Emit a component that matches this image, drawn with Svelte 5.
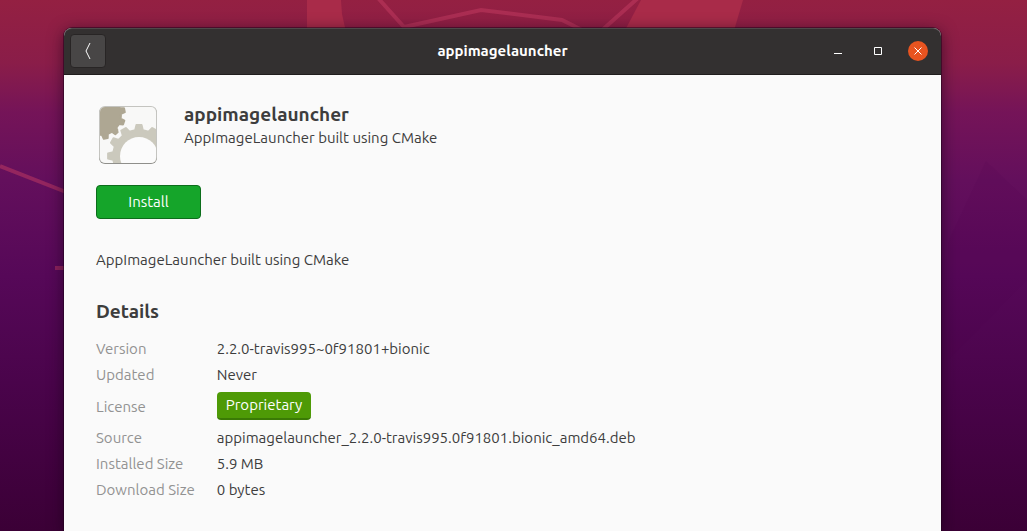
<script lang="ts">
	interface Detail {
		label: string;
		value: string;
		badge?: boolean;
	}

	const app = {
		name: 'appimagelauncher',
		summary: 'AppImageLauncher built using CMake',
		description: 'AppImageLauncher built using CMake'
	};

	const details: Detail[] = [
		{ label: 'Version', value: '2.2.0-travis995~0f91801+bionic' },
		{ label: 'Updated', value: 'Never' },
		{ label: 'License', value: 'Proprietary', badge: true },
		{ label: 'Source', value: 'appimagelauncher_2.2.0-travis995.0f91801.bionic_amd64.deb' },
		{ label: 'Installed Size', value: '5.9 MB' },
		{ label: 'Download Size', value: '0 bytes' }
	];

	// Teeth are drawn as one outline, four points for each tooth
	function gear(cx: number, cy: number, inner: number, outer: number, teeth: number, turn: number) {
		const step = (Math.PI * 2) / teeth;
		const points: string[] = [];
		for (let i = 0; i < teeth; i++) {
			const mid = i * step + turn;
			const corners = [
				[inner, -0.28],
				[outer, -0.16],
				[outer, 0.16],
				[inner, 0.28]
			];
			for (const [r, offset] of corners) {
				const a = mid + offset * step;
				points.push(`${(cx + r * Math.cos(a)).toFixed(1)},${(cy + r * Math.sin(a)).toFixed(1)}`);
			}
		}
		return points.join(' ');
	}

	const smallGear = gear(5, 12, 20, 24, 12, -0.2);
	const bigGear = gear(43, 53, 26, 31, 12, 0);
</script>

<div class="desktop">
	<svg class="wallpaper" viewBox="0 0 1027 531" preserveAspectRatio="none" aria-hidden="true">
		<path class="shape" d="M307 0H341L342 14L346 32H307Z" />
		<path class="shape" d="M641 0H743L733 34H623Z" />
		<path class="line" d="M378 -2L404 27L481 10L562 20L586 32M600 32L638 -2M0 166L66 192M55 268H66" />
		<path class="shade" d="M1027 200L986 161L948 242V360L1027 280Z" />
	</svg>

	<main class="window">
		<header class="titlebar">
			<button class="back" aria-label="Back">
				<svg width="16" height="18" viewBox="0 0 16 18"><path d="M10 1L6 9L10 17" /></svg>
			</button>
			<h1>{app.name}</h1>
			<div class="controls">
				<button class="control" aria-label="Minimize">
					<svg width="10" height="10" viewBox="0 0 10 10"><path d="M1 7.5H9" /></svg>
				</button>
				<button class="control" aria-label="Maximize">
					<svg width="10" height="10" viewBox="0 0 10 10"><path d="M1.5 1.5H8.5V8.5H1.5Z" /></svg>
				</button>
				<button class="control close" aria-label="Close">
					<svg width="10" height="10" viewBox="0 0 10 10"><path d="M1.5 1.5L8.5 8.5M8.5 1.5L1.5 8.5" /></svg>
				</button>
			</div>
		</header>

		<div class="content">
			<div class="app-header">
				<svg class="app-icon" viewBox="0 0 64 64" aria-hidden="true">
					<defs>
						<clipPath id="tile"><rect x="4" y="4" width="56" height="56" rx="5" /></clipPath>
					</defs>
					<rect x="3" y="4" width="58" height="57" rx="6" fill="#8f8f8b" />
					<rect x="3" y="3" width="58" height="57" rx="6" fill="#c4c4c0" />
					<rect x="4" y="4" width="56" height="56" rx="5" fill="#f8f8f7" />
					<g clip-path="url(#tile)">
						<polygon points={smallGear} fill="#aea793" stroke="#aea793" stroke-width="2" stroke-linejoin="round" />
						<polygon points={bigGear} fill="none" stroke="#f8f8f7" stroke-width="6" stroke-linejoin="round" />
						<polygon points={bigGear} fill="#cbc9bd" stroke="#cbc9bd" stroke-width="2" stroke-linejoin="round" />
						<circle cx="43" cy="53" r="19" fill="#fbfbfb" />
					</g>
				</svg>
				<div class="app-titles">
					<h2>{app.name}</h2>
					<p>{app.summary}</p>
				</div>
			</div>

			<button class="install">Install</button>

			<p class="description">{app.description}</p>

			<h2>Details</h2>
			<table>
				<tbody>
					{#each details as detail (detail.label)}
						<tr>
							<th scope="row">{detail.label}</th>
							<td>
								{#if detail.badge}
									<button class="badge">{detail.value}</button>
								{:else}
									{detail.value}
								{/if}
							</td>
						</tr>
					{/each}
				</tbody>
			</table>
		</div>
	</main>
</div>

<style>
	:global(body) {
		margin: 0;
	}

	.desktop {
		position: relative;
		box-sizing: border-box;
		display: flex;
		min-height: 100vh;
		padding: 28px 86px 0 64px;
		overflow: hidden;
		background: linear-gradient(#942042 0%, #8a1d49 12%, #751458 21%, #630f5c 34%, #560858 52%, #4a044b 72%, #3b0036 100%);
		color: #3d3d3d;
		font-family: Ubuntu, 'Noto Sans', sans-serif;
		font-size: 15px;
		line-height: 20px;
	}

	.wallpaper {
		position: absolute;
		inset: 0;
		width: 100%;
		height: 100%;
	}

	.shape {
		fill: #a92b49;
	}

	.line {
		fill: none;
		stroke: #c43b62;
		stroke-opacity: 0.5;
		stroke-width: 4;
	}

	.shade {
		fill: #4a0052;
		fill-opacity: 0.1;
	}

	.window {
		position: relative;
		flex: 1;
		display: flex;
		flex-direction: column;
		min-width: 0;
		border-radius: 8px 8px 0 0;
		background: #fafafa;
		box-shadow: 0 0 0 1px rgba(30, 0, 25, 0.5), 0 3px 16px rgba(20, 0, 20, 0.6);
	}

	.titlebar {
		box-sizing: border-box;
		display: grid;
		grid-template-columns: 1fr auto 1fr;
		align-items: center;
		height: 47px;
		padding: 0 6px 2px;
		border-top: 1px solid #4d4849;
		border-bottom: 1px solid #201d1d;
		border-radius: 8px 8px 0 0;
		background: #333030;
		color: #fff;
	}

	h1 {
		margin: 0;
		font-size: 15px;
		font-weight: 700;
	}

	button {
		box-sizing: border-box;
		padding: 0;
		border: 0;
		font: inherit;
		cursor: pointer;
	}

	button svg {
		display: block;
		fill: none;
		stroke: #fff;
	}

	.back {
		display: flex;
		align-items: center;
		justify-content: center;
		width: 36px;
		height: 34px;
		border: 1px solid #282525;
		border-radius: 4px;
		background: #484646;
	}

	.controls {
		display: flex;
		justify-content: flex-end;
		gap: 20px;
		padding-right: 7px;
	}

	.control {
		display: flex;
		align-items: center;
		justify-content: center;
		width: 20px;
		height: 20px;
		border-radius: 50%;
		background: transparent;
	}

	.close {
		background: #e95420;
	}

	.content {
		padding: 28px 32px;
	}

	.app-header {
		display: flex;
		gap: 24px;
	}

	.app-icon {
		flex: none;
		width: 64px;
		height: 64px;
	}

	h2 {
		margin: 0;
		font-size: 19px;
		font-weight: 700;
		line-height: 22px;
	}

	p {
		margin: 0;
	}

	.app-titles p {
		margin-top: 3px;
	}

	.install {
		display: block;
		width: 105px;
		height: 34px;
		margin-top: 18px;
		border: 1px solid #0c6d1b;
		border-radius: 4px;
		background: #15a52a;
		color: #fff;
	}

	.description {
		margin: 31px 0 30px;
	}

	table {
		margin-top: 14px;
		border-collapse: collapse;
	}

	th,
	td {
		height: 26px;
		padding: 0;
		text-align: left;
		vertical-align: middle;
	}

	th {
		padding-right: 22px;
		color: #929292;
		font-weight: 400;
	}

	.badge {
		display: block;
		height: 28px;
		margin: 4px 0 5px;
		padding: 0 9px;
		border-bottom: 2px solid #3a7a05;
		border-radius: 4px;
		background: #4e9a06;
		color: #fff;
	}
</style>
